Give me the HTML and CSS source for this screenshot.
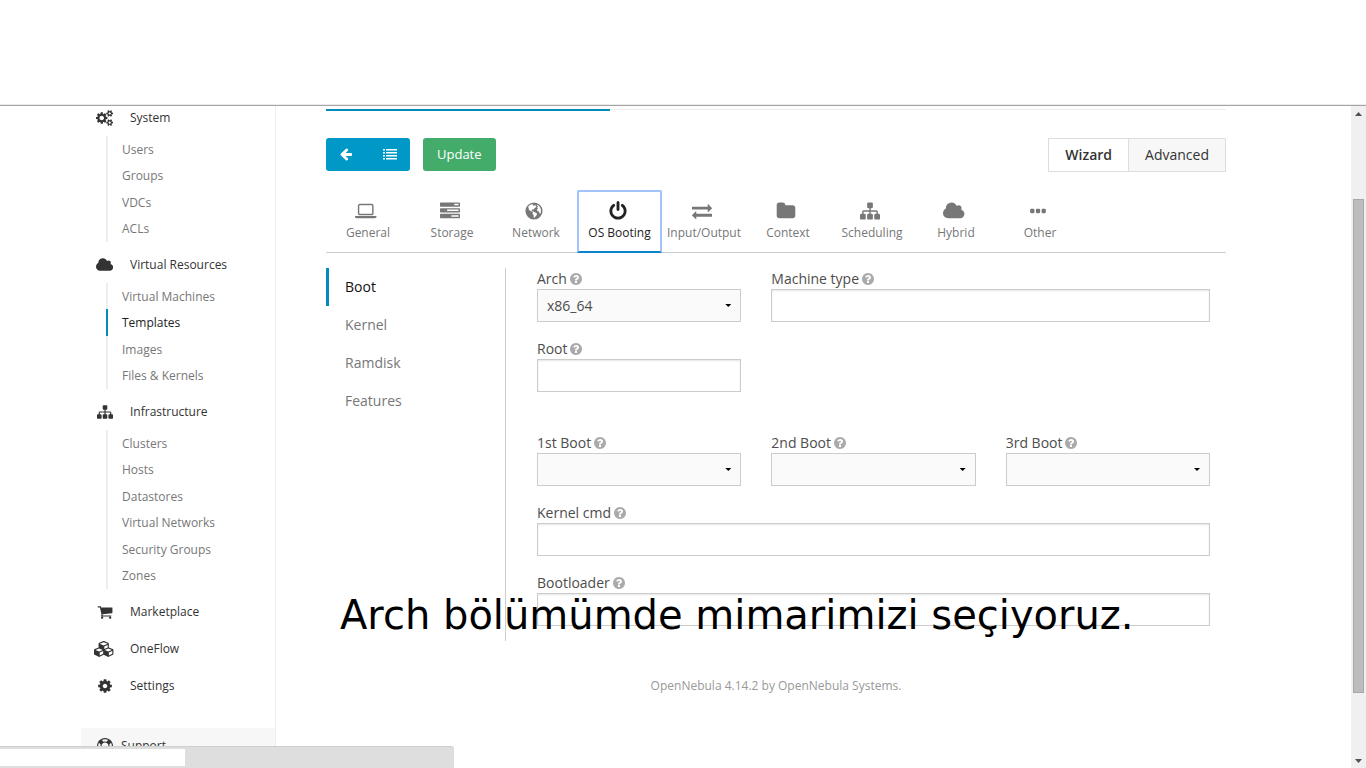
FILE: index.html
```html
<!DOCTYPE html>
<html lang="en">
<head>
<meta charset="utf-8">
<title>OpenNebula Sunstone</title>
<link rel="stylesheet" href="styles.css">
</head>
<body>
<svg class="defs" aria-hidden="true">
  <defs>
    <path id="i-cogs" d="M896 896q0-106-75-181t-181-75-181 75-75 181 75 181 181 75 181-75 75-181zm768 512q0-52-38-90t-90-38-90 38-38 90q0 53 37.500 90.500t90.500 37.500 90.500-37.500 37.500-90.500zm0-1024q0-52-38-90t-90-38-90 38-38 90q0 53 37.500 90.500t90.500 37.500 90.500-37.500 37.500-90.500zm-384 421v185q0 10-7 19.500t-16 10.500l-155 24q-11 35-32 76 34 48 90 115 7 11 7 20 0 12-7 19-23 30-82.500 89.500t-78.500 59.500q-11 0-21-7l-115-90q-37 19-77 31-11 108-23 155-7 24-30 24h-186q-11 0-20-7.500t-10-17.500l-23-153q-34-10-75-31l-118 89q-7 7-20 7-11 0-21-8-144-133-144-160 0-9 7-19 10-14 41-53t47-61q-23-44-35-82l-152-24q-10-1-17-9.500t-7-19.500v-185q0-10 7-19.500t16-10.500l155-24q11-35 32-76-34-48-90-115-7-11-7-20 0-12 7-20 22-30 82-89t79-59q11 0 21 7l115 90q34-18 77-32 11-108 23-154 7-24 30-24h186q11 0 20 7.500t10 17.500l23 153q34 10 75 31l118-89q8-7 20-7 11 0 21 8 144 133 144 160 0 8-7 19-12 16-42 54t-45 60q23 48 34 82l152 23q10 2 17 10.500t7 19.500zm640 533v140q0 16-149 31-12 27-30 52 51 113 51 138 0 4-4 7-122 71-124 71-8 0-46-47t-52-68q-20 2-30 2t-30-2q-14 21-52 68t-46 47q-2 0-124-71-4-3-4-7 0-25 51-138-18-25-30-52-149-15-149-31v-140q0-16 149-31 13-29 30-52-51-113-51-138 0-4 4-7 4-2 35-20t59-34 30-16q8 0 46 46.500t52 67.500q20-2 30-2t30 2q51-71 92-112l6-2q4 0 124 70 4 3 4 7 0 25-51 138 17 23 30 52 149 15 149 31zm0-1024v140q0 16-149 31-12 27-30 52 51 113 51 138 0 4-4 7-122 71-124 71-8 0-46-47t-52-68q-20 2-30 2t-30-2q-14 21-52 68t-46 47q-2 0-124-71-4-3-4-7 0-25 51-138-18-25-30-52-149-15-149-31v-140q0-16 149-31 13-29 30-52-51-113-51-138 0-4 4-7 4-2 35-20t59-34 30-16q8 0 46 46.500t52 67.500q20-2 30-2t30 2q51-71 92-112l6-2q4 0 124 70 4 3 4 7 0 25-51 138 17 23 30 52 149 15 149 31z"/>
    <path id="i-cloud" d="M1984 1152q0 159-112.500 271.500t-271.500 112.500h-1088q-185 0-316.500-131.500t-131.500-316.500q0-132 71-241.500t187-163.500q-2-28-2-43 0-212 150-362t362-150q158 0 286.500 88t187.500 230q70-62 166-62 106 0 181 75t75 181q0 75-41 138 129 30 213 134.500t84 239.500z"/>
    <path id="i-sitemap" d="M1792 1248v320q0 40-28 68t-68 28h-320q-40 0-68-28t-28-68v-320q0-40 28-68t68-28h96v-192h-512v192h96q40 0 68 28t28 68v320q0 40-28 68t-68 28h-320q-40 0-68-28t-28-68v-320q0-40 28-68t68-28h96v-192h-512v192h96q40 0 68 28t28 68v320q0 40-28 68t-68 28h-320q-40 0-68-28t-28-68v-320q0-40 28-68t68-28h96v-192q0-52 38-90t90-38h512v-192h-96q-40 0-68-28t-28-68v-320q0-40 28-68t68-28h320q40 0 68 28t28 68v320q0 40-28 68t-68 28h-96v192h512q52 0 90 38t38 90v192h96q40 0 68 28t28 68z"/>
    <path id="i-cart" d="M704 1536q0 52-38 90t-90 38-90-38-38-90 38-90 90-38 90 38 38 90zm896 0q0 52-38 90t-90 38-90-38-38-90 38-90 90-38 90 38 38 90zm128-1088v512q0 24-16.500 42.500t-40.500 21.500l-1044 122q13 60 13 70 0 16-24 64h920q26 0 45 19t19 45-19 45-45 19h-1024q-26 0-45-19t-19-45q0-11 8-31.500t16-36 21.500-40 15.500-29.500l-177-823h-204q-26 0-45-19t-19-45 19-45 45-19h256q16 0 28.500 6.500t19.500 15.500 13 24.500 8 26 5.500 29.500 4.500 26h1201q26 0 45 19t19 45z"/>
    <path id="i-cubes" d="M640 1632l384-192v-314l-384 164v342zm-64-454l404-173-404-173-404 173zm1088 454l384-192v-314l-384 164v342zm-64-454l404-173-404-173-404 173zm-448-293l384-165v-266l-384 164v267zm-64-379l441-189-441-189-441 189zm1088 518v416q0 36-19 67t-52 47l-448 224q-25 14-57 14t-57-14l-448-224q-4-2-7-4-2 2-7 4l-448 224q-25 14-57 14t-57-14l-448-224q-33-16-52-47t-19-67v-416q0-38 21.500-70t56.500-48l434-186v-400q0-38 21.500-70t56.500-48l448-192q23-10 50-10t50 10l448 192q35 16 56.500 48t21.500 70v400l434 186q36 16 57 48t21 70z"/>
    <path id="i-cog" d="M1152 896q0-106-75-181t-181-75-181 75-75 181 75 181 181 75 181-75 75-181zm512-109v222q0 12-8 23t-20 13l-185 28q-19 54-39 91 35 50 107 138 10 12 10 25t-9 23q-27 37-99 108t-94 71q-12 0-26-9l-138-108q-44 23-91 38-16 136-29 186-7 28-36 28h-222q-14 0-24.500-8.500t-11.500-21.500l-28-184q-49-16-90-37l-141 107q-10 9-25 9-14 0-25-11-126-114-165-168-7-10-7-23 0-12 8-23 15-21 51-66.500t54-70.500q-27-50-41-99l-183-27q-13-2-21-12.500t-8-23.500v-222q0-12 8-23t19-13l186-28q14-46 39-92-40-57-107-138-10-12-10-24 0-10 9-23 26-36 98.500-107.500t94.500-71.500q13 0 26 10l138 107q44-23 91-38 16-136 29-186 7-28 36-28h222q14 0 24.500 8.500t11.500 21.500l28 184q49 16 90 37l142-107q9-9 24-9 13 0 25 10 129 119 165 170 7 8 7 22 0 12-8 23-15 21-51 66.500t-54 70.500q26 50 41 98l183 28q13 2 21 12.500t8 23.500z"/>
    <path id="i-ring" d="M896 0q182 0 348 71t286 191 191 286 71 348-71 348-191 286-286 191-348 71-348-71-286-191-191-286-71-348 71-348 191-286 286-191 348-71zm0 128q-190 0-361 90l194 194q82-28 167-28t167 28l194-194q-171-90-361-90zm-678 1129l194-194q-28-82-28-167t28-167l-194-194q-90 171-90 361t90 361zm678 407q190 0 361-90l-194-194q-82 28-167 28t-167-28l-194 194q171 90 361 90zm0-384q159 0 271.500-112.500t112.500-271.500-112.500-271.500-271.500-112.500-271.500 112.500-112.500 271.500 112.500 271.500 271.500 112.500zm484-217l194 194q90-171 90-361t-90-361l-194 194q28 82 28 167t-28 167z"/>
    <path id="i-left" d="M1664 896v128q0 53-32.500 90.500t-84.500 37.500h-704l293 294q38 36 38 90t-38 90l-75 76q-37 37-90 37-52 0-91-37l-651-652q-37-37-37-90 0-52 37-91l651-650q38-38 91-38 52 0 90 38l75 74q38 38 38 91t-38 91l-293 293h704q52 0 84.500 37.500t32.500 90.500z"/>
    <path id="i-list" d="M0 256h256v192H0zM0 640h256v192H0zM0 1024h256v192H0zM0 1408h256v192H0zM384 256h1408v192H384zM384 640h1408v192H384zM384 1024h1408v192H384zM384 1408h1408v192H384z"/>
    <path id="i-laptop" fill-rule="evenodd" d="M416 1280q-66 0-113-47t-47-113V416q0-66 47-113t113-47h1088q66 0 113 47t47 113v704q0 66-47 113t-113 47zM384 416v704q0 32 32 32h1088q32 0 32-32V416q0-32-32-32H416q-32 0-32 32zM0 1344h1920v96q0 40-47 68t-113 28H160q-66 0-113-28t-47-68z"/>
    <path id="i-tasks" fill-rule="evenodd" d="M64 128h1664q64 0 64 64v256q0 64-64 64H64q-64 0-64-64V192q0-64 64-64zM1280 256v128h384V256zM64 640h1664q64 0 64 64v256q0 64-64 64H64q-64 0-64-64V704q0-64 64-64zM640 768v128h1024V768zM64 1152h1664q64 0 64 64v256q0 64-64 64H64q-64 0-64-64v-256q0-64 64-64zM1024 1280v128h640v-128z"/>
    <path id="i-globe" fill-rule="evenodd" d="M896 128a768 768 0 1 1 0 1536 768 768 0 0 1 0-1536zM700 290Q520 340 400 470L380 560 430 640 420 730 500 850 600 900 720 960 800 1010 760 1130 850 1260 880 1480 960 1500 1020 1390 1130 1280 1170 1150 1080 1060 940 1000 850 940 760 950 690 870 720 770 850 760 900 690 1020 590 1120 530 1040 400 940 350 900 440 800 410 830 310zM1230 330L1150 410 1250 460 1190 600 1270 640 1170 740 1190 900 1340 950 1390 1130 1460 1150 1520 960Q1550 560 1230 330z"/>
    <path id="i-power" d="M1664 896q0 156-61 298t-164 245-245 164-298 61-298-61-245-164-164-245-61-298q0-182 80.500-343t226.500-270q43-32 95.500-25t83.500 50q32 42 24.500 94.500t-49.500 84.500q-98 74-151.500 181t-53.500 228q0 104 40.500 198.500t109.500 163.500 163.500 109.500 198.500 40.500 198.500-40.500 163.500-109.500 109.500-163.500 40.500-198.500q0-121-53.500-228t-151.500-181q-42-32-49.500-84.500t24.500-94.500q31-43 84-50t95 25q146 109 226.500 270t80.500 343zm-640-768v640q0 52-38 90t-90 38-90-38-38-90v-640q0-52 38-90t90-38 90 38 38 90z"/>
    <path id="i-exchange" d="M1792 1184v192q0 13-9.500 22.500t-22.500 9.500h-1376v192q0 13-9.500 22.500t-22.500 9.500q-12 0-24-10l-319-320q-9-9-9-22 0-14 9-23l320-320q9-9 23-9 13 0 22.500 9.500t9.500 22.500v192h1376q13 0 22.500 9.500t9.500 22.500zm0-544q0 14-9 23l-320 320q-9 9-23 9-13 0-22.500-9.500t-9.500-22.500v-192h-1376q-13 0-22.500-9.500t-9.500-22.500v-192q0-13 9.500-22.500t22.500-9.500h1376v-192q0-14 9-23t23-9q12 0 24 10l319 319q9 9 9 23z"/>
    <path id="i-folder" d="M1728 608v704q0 92-66 158t-158 66h-1216q-92 0-158-66t-66-158v-960q0-92 66-158t158-66h320q92 0 158 66t66 158v32h672q92 0 158 66t66 158z"/>
    <path id="i-dots" d="M288 704h192q96 0 96 96v192q0 96-96 96H288q-96 0-96-96V800q0-96 96-96zM800 704h192q96 0 96 96v192q0 96-96 96H800q-96 0-96-96V800q0-96 96-96zM1312 704h192q96 0 96 96v192q0 96-96 96h-192q-96 0-96-96V800q0-96 96-96z"/>
    <path id="i-help" d="M1024 1376v-192q0-14-9-23t-23-9h-192q-14 0-23 9t-9 23v192q0 14 9 23t23 9h192q14 0 23-9t9-23zm256-672q0-88-55.500-163t-138.500-116-170-41q-243 0-371 213-15 24 8 42l132 100q7 6 19 6 16 0 25-12 53-68 86-92 34-24 86-24 48 0 85.500 26t37.500 59q0 38-20 61t-68 45q-63 28-115.500 86.500t-52.500 125.500v36q0 14 9 23t23 9h192q14 0 23-9t9-23q0-19 21.500-49.500t54.500-49.500q32-18 49-28.500t46-35 44.500-48 28-60.500 12.500-81zm384 192q0 209-103 385.500t-279.500 279.500-385.500 103-385.500-103-279.500-279.500-103-385.500 103-385.500 279.500-279.500 385.500-103 385.500 103 279.500 279.500 103 385.500z"/>
  </defs>
</svg>

<header class="top-strip"></header>

<div class="viewport">
  <div class="scroll-area">
    <div class="page">
      <nav class="sidebar" aria-label="Sections">
        <a class="side-head" href="#system"><span class="side-icon"><svg viewBox="0 0 1920 1792"><use href="#i-cogs"/></svg></span>System</a>
        <ul class="side-list">
          <li><a href="#users">Users</a></li>
          <li><a href="#groups">Groups</a></li>
          <li><a href="#vdcs">VDCs</a></li>
          <li><a href="#acls">ACLs</a></li>
        </ul>
        <a class="side-head" href="#virtual"><span class="side-icon"><svg viewBox="64 0 1920 1792"><use href="#i-cloud"/></svg></span>Virtual Resources</a>
        <ul class="side-list">
          <li><a href="#vms">Virtual Machines</a></li>
          <li class="current"><a href="#templates" aria-current="page">Templates</a></li>
          <li><a href="#images">Images</a></li>
          <li><a href="#files">Files &amp; Kernels</a></li>
        </ul>
        <a class="side-head" href="#infra"><span class="side-icon"><svg viewBox="0 0 1792 1792"><use href="#i-sitemap"/></svg></span>Infrastructure</a>
        <ul class="side-list">
          <li><a href="#clusters">Clusters</a></li>
          <li><a href="#hosts">Hosts</a></li>
          <li><a href="#datastores">Datastores</a></li>
          <li><a href="#vnets">Virtual Networks</a></li>
          <li><a href="#secgroups">Security Groups</a></li>
          <li><a href="#zones">Zones</a></li>
        </ul>
        <a class="side-head" href="#market"><span class="side-icon"><svg viewBox="0 0 1792 1792"><use href="#i-cart"/></svg></span>Marketplace</a>
        <a class="side-head" href="#oneflow"><span class="side-icon"><svg viewBox="0 0 2304 1792"><use href="#i-cubes"/></svg></span>OneFlow</a>
        <a class="side-head" href="#settings"><span class="side-icon"><svg viewBox="0 0 1792 1792"><use href="#i-cog"/></svg></span>Settings</a>
        <a class="side-head support" href="#support"><span class="side-icon"><svg viewBox="0 0 1792 1792"><use href="#i-ring"/></svg></span>Support</a>
      </nav>

      <main class="main">
        <div class="progress"><div class="progress-bar"></div></div>

        <div class="actions">
          <div class="btn-group">
            <button class="btn btn-blue" type="button" aria-label="Back"><svg viewBox="0 0 1792 1792"><use href="#i-left"/></svg></button>
            <button class="btn btn-blue" type="button" aria-label="List"><svg viewBox="0 0 1792 1792"><use href="#i-list"/></svg></button>
          </div>
          <button class="btn btn-green" type="button">Update</button>
          <div class="mode">
            <button class="mode-btn active" type="button">Wizard</button>
            <button class="mode-btn" type="button">Advanced</button>
          </div>
        </div>

        <nav class="tabs" aria-label="Template sections">
          <a class="tab" href="#general"><svg viewBox="0 0 1920 1792"><use href="#i-laptop"/></svg>General</a>
          <a class="tab" href="#storage"><svg viewBox="0 0 1792 1792"><use href="#i-tasks"/></svg>Storage</a>
          <a class="tab" href="#network"><svg viewBox="0 0 1792 1792"><use href="#i-globe"/></svg>Network</a>
          <a class="tab selected" href="#os"><svg viewBox="0 0 1792 1792"><use href="#i-power"/></svg>OS Booting</a>
          <a class="tab" href="#io"><svg viewBox="0 0 1792 1792"><use href="#i-exchange"/></svg>Input/Output</a>
          <a class="tab" href="#context"><svg viewBox="0 0 1792 1792"><use href="#i-folder"/></svg>Context</a>
          <a class="tab" href="#scheduling"><svg viewBox="0 0 1792 1792"><use href="#i-sitemap"/></svg>Scheduling</a>
          <a class="tab" href="#hybrid"><svg viewBox="64 0 1920 1792"><use href="#i-cloud"/></svg>Hybrid</a>
          <a class="tab" href="#other"><svg viewBox="0 0 1792 1792"><use href="#i-dots"/></svg>Other</a>
        </nav>

        <div class="panel">
          <nav class="subnav" aria-label="OS booting">
            <a class="active" href="#boot">Boot</a>
            <a href="#kernel">Kernel</a>
            <a href="#ramdisk">Ramdisk</a>
            <a href="#features">Features</a>
          </nav>
          <form class="fields">
            <div class="grid">
              <div class="field">
                <label for="arch">Arch <svg viewBox="128 128 1536 1536"><use href="#i-help"/></svg></label>
                <div class="select"><select id="arch"><option>x86_64</option><option>i686</option></select></div>
              </div>
              <div class="field wide">
                <label for="machine">Machine type <svg viewBox="128 128 1536 1536"><use href="#i-help"/></svg></label>
                <input id="machine" type="text">
              </div>
              <div class="field">
                <label for="root">Root <svg viewBox="128 128 1536 1536"><use href="#i-help"/></svg></label>
                <input id="root" type="text">
              </div>
            </div>
            <div class="grid">
              <div class="field">
                <label for="boot1">1st Boot <svg viewBox="128 128 1536 1536"><use href="#i-help"/></svg></label>
                <div class="select"><select id="boot1"><option></option><option>HD</option></select></div>
              </div>
              <div class="field">
                <label for="boot2">2nd Boot <svg viewBox="128 128 1536 1536"><use href="#i-help"/></svg></label>
                <div class="select"><select id="boot2"><option></option><option>HD</option></select></div>
              </div>
              <div class="field">
                <label for="boot3">3rd Boot <svg viewBox="128 128 1536 1536"><use href="#i-help"/></svg></label>
                <div class="select"><select id="boot3"><option></option><option>HD</option></select></div>
              </div>
              <div class="field full">
                <label for="kcmd">Kernel cmd <svg viewBox="128 128 1536 1536"><use href="#i-help"/></svg></label>
                <input id="kcmd" type="text">
              </div>
              <div class="field full">
                <label for="loader">Bootloader <svg viewBox="128 128 1536 1536"><use href="#i-help"/></svg></label>
                <input id="loader" type="text">
              </div>
            </div>
          </form>
        </div>

        <footer class="footer">OpenNebula 4.14.2 by <a href="#systems">OpenNebula Systems</a>.</footer>
      </main>
    </div>
  </div>

  <div class="scrollbar" aria-hidden="true">
    <span class="arrow up"></span>
    <div class="track"><div class="thumb"></div></div>
    <span class="arrow down"></span>
  </div>
</div>

<p class="caption">Arch bölümümde mimarimizi seçiyoruz.</p>
<div class="status"><div class="status-text"></div></div>
</body>
</html>
```
FILE: styles.css
```css
* { box-sizing: border-box; }

body {
  margin: 0;
  height: 100vh;
  display: flex;
  flex-direction: column;
  overflow: hidden;
  background: #fff;
  color: #333;
  font-family: "Open Sans", "Noto Sans", sans-serif;
  font-size: 14px;
}

a { color: inherit; text-decoration: none; }
svg { fill: currentColor; display: block; }
.defs { position: absolute; width: 0; height: 0; }

.top-strip {
  flex: none;
  height: 106px;
  border-bottom: 1px solid #a5a3a4;
  box-shadow: inset 0 -1px #ececec;
}

.viewport { flex: 1; min-height: 0; display: flex; }
.scroll-area { flex: 1; overflow: hidden; }

.page {
  display: flex;
  min-height: 100%;
  max-width: 1189px;
  margin: 0 auto;
}

/* Sidebar */
.sidebar {
  flex: none;
  width: 195px;
  margin-top: -7px;
  border-right: 1px solid #eee;
  font-size: 12px;
}
.side-head {
  display: flex;
  align-items: center;
  gap: 15px;
  height: 37px;
  padding-left: 13px;
}
.side-icon { width: 21px; display: flex; justify-content: center; }
.side-icon svg { height: 16px; }
.side-list {
  list-style: none;
  margin: 0 0 4px 25px;
  padding: 0;
  color: #777;
}
.side-list li {
  height: 26px;
  line-height: 28px;
  padding-left: 14px;
  border-left: 2px solid #eee;
}
.side-list li:nth-child(even) { height: 27px; }
.side-list .current { color: #222; border-color: #008cba; }
.support {
  height: 35px;
  margin-top: 24px;
  gap: 6px;
  background: #f7f7f7;
  border-radius: 3px 3px 0 0;
}

/* Main column */
.main { flex: 1; min-width: 0; padding: 3px 44px 0 50px; }

.progress { height: 2px; border-top: 1px solid #eee; margin-bottom: 27px; }
.progress-bar { width: 284px; height: 2px; margin-top: -1px; background: #008cba; }

.actions { display: flex; align-items: flex-start; gap: 13px; }
button { font-family: inherit; cursor: pointer; }
.btn-group { display: flex; border-radius: 3px; overflow: hidden; }
.btn {
  height: 33px;
  padding: 0 14px 2px;
  border: 0;
  color: #fff;
  font-size: 13px;
}
.btn-blue { width: 42px; padding-left: 13px; background: #0098c6; }
.btn-blue svg { height: 14px; width: 14px; }
.btn-blue + .btn-blue { padding-left: 15px; }
.btn-green { background: #43ac6a; border-radius: 3px; }
.mode { display: flex; margin-left: auto; }
.mode-btn {
  height: 34px;
  padding: 0 16px 2px;
  border: 1px solid #ddd;
  background: #f7f7f7;
  color: #333;
  font-size: 14px;
}
.mode-btn.active { background: #fff; font-weight: 600; border-right-width: 0; }

.tabs { display: flex; margin-top: 18px; border-bottom: 1px solid #ccc; }
.tab {
  width: 84px;
  height: 63px;
  margin-bottom: -1px;
  padding-top: 11px;
  display: flex;
  flex-direction: column;
  align-items: center;
  gap: 2px;
  font-size: 12px;
  line-height: 20px;
  color: #777;
}
.tab svg { height: 20px; margin-right: 4px; }
.tab.selected {
  width: 85px;
  margin-left: -1px;
  color: #222;
  padding-top: 9px;
  border: 2px solid #a2c4fb;
  border-bottom-color: #0a84cc;
  border-radius: 2px 2px 0 0;
}

.panel { display: flex; margin-top: 15px; }
.subnav { flex: none; width: 179px; }
.subnav a {
  display: block;
  height: 38px;
  line-height: 38px;
  padding-left: 16px;
  border-left: 3px solid transparent;
  color: #777;
}
.subnav .active { color: #111; border-color: #008cba; }

.fields {
  flex: 1;
  display: flex;
  flex-direction: column;
  gap: 40px;
  padding: 0 16px 15px 31px;
  border-left: 1px solid #ccc;
}
.grid { display: grid; grid-template-columns: repeat(3, 1fr); gap: 16px 30px; }
.wide { grid-column: span 2; }
.full { grid-column: span 3; }
.field label {
  display: flex;
  align-items: center;
  gap: 3px;
  height: 21px;
  color: #4d4d4d;
}
.field label svg { width: 12px; height: 12px; color: #aaa; }
.field input, .field select {
  display: block;
  width: 100%;
  height: 33px;
  padding: 0 9px;
  border: 1px solid #ccc;
  border-radius: 0;
  background: #fff;
  color: #4d4d4d;
  font-family: inherit;
  font-size: 14px;
}
.field input { box-shadow: inset 0 1px 2px rgba(0, 0, 0, .1); }
.select { display: grid; align-items: center; }
.select > select, .select::after { grid-area: 1 / 1; }
.select > select { appearance: none; background: #fafafa; }
.select::after {
  content: "";
  justify-self: end;
  width: 6px;
  height: 3px;
  margin-right: 10px;
  background: #000;
  clip-path: polygon(0 0, 100% 0, 50% 100%);
  pointer-events: none;
}

.footer { margin-top: 35px; text-align: center; font-size: 12px; line-height: 20px; color: #999; }

/* Scrollbar */
.scrollbar {
  flex: none;
  width: 15px;
  display: flex;
  flex-direction: column;
  align-items: center;
  padding: 6px 0 5px;
  background: #f0f0f0;
}
.arrow { width: 7px; height: 4px; background: #505050; }
.up { clip-path: polygon(50% 0, 100% 100%, 0 100%); }
.down { clip-path: polygon(0 0, 100% 0, 50% 100%); }
.track { flex: 1; width: 11px; display: flex; flex-direction: column; }
.track::before { content: ""; flex: 83; }
.track::after { content: ""; flex: 66; }
.thumb { flex: 494; background: #bcbcbc; border: 1px solid #a8a8a8; }

/* Floating overlays */
.caption {
  position: absolute;
  left: 340px;
  top: 591px;
  margin: 0;
  color: #000;
  font-family: "DejaVu Sans", sans-serif;
  font-size: 40px;
  line-height: 48px;
  white-space: nowrap;
}
.status {
  position: absolute;
  left: 0;
  bottom: 0;
  width: 454px;
  padding: 2px 0;
  background: #dedede;
  border-top: 1px solid #cfcfcf;
  border-radius: 0 3px 0 0;
}
.status-text { width: 185px; height: 17px; background: #fff; }
```
